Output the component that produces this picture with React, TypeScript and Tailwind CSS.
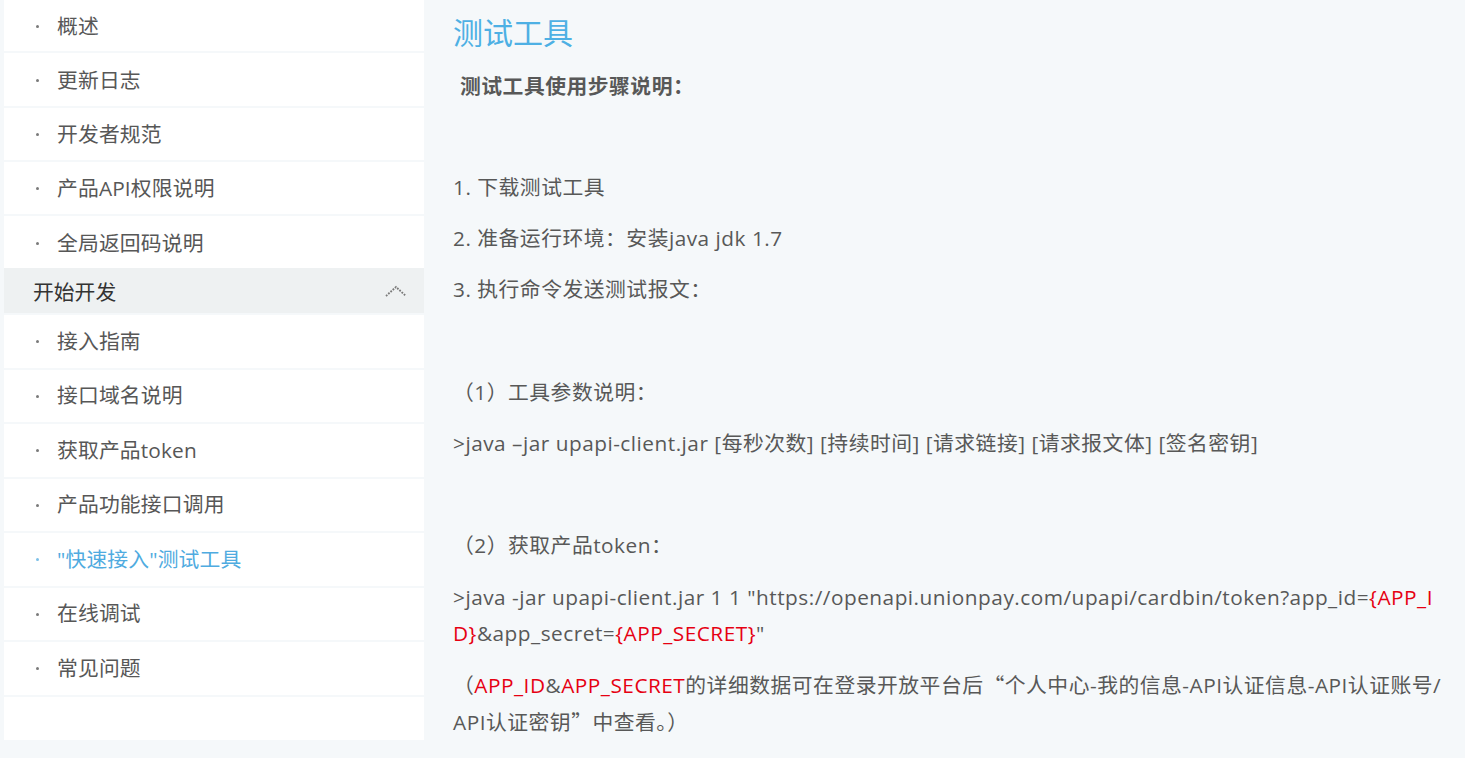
import React from 'react';

const topItems = ['概述', '更新日志', '开发者规范', '产品API权限说明', '全局返回码说明'];
const devItems = ['接入指南', '接口域名说明', '获取产品token', '产品功能接口调用', '"快速接入"测试工具', '在线调试', '常见问题'];
const ACTIVE = '"快速接入"测试工具';

const FONT = { fontFamily: '"Open Sans", "Noto Sans CJK SC", sans-serif' };

const NavItem: React.FC<{ label: string; tall?: boolean }> = ({ label, tall }) => {
  const active = label === ACTIVE;
  return (
    <div
      className={`flex items-center bg-white pl-[32px] text-[20.8px] tracking-[0.15px] ${tall ? 'h-[52.5px]' : 'h-[52.25px] pt-[2px]'} ${active ? 'text-[#4fabe0]' : 'text-[#575757]'}`}
    >
      <span className={`w-[3px] h-[3px] rounded-full mr-[18px] ${active ? 'bg-[#7cc0e8]' : 'bg-[#7a7a7a]'}`} />
      <span>{label}</span>
    </div>
  );
};

const Red: React.FC<{ children: React.ReactNode }> = ({ children }) => (
  <span className="text-[#e60012]">{children}</span>
);

// full-width quote marks, as a CJK font draws them
const Q: React.FC<{ children: React.ReactNode }> = ({ children }) => (
  <span style={{ fontFamily: '"Noto Sans CJK SC", sans-serif' }}>{children}</span>
);

const App: React.FC = () => {
  return (
    <div className="w-[1465px] h-[758px] overflow-hidden bg-[#f5f8fa] flex" style={FONT}>
      {/* sidebar */}
      <aside className="w-[420px] ml-[4px] mt-[-1px] flex flex-col shrink-0">
        <div className="flex flex-col gap-[2px]">
          {topItems.map((t) => (
            <NavItem key={t} label={t} />
          ))}
        </div>
        <div className="h-[45px] bg-[#eef1f2] flex items-center justify-between pl-[29px] pr-[16px] pt-[4px] text-[20.8px] text-[#333]">
          <span>开始开发</span>
          <svg width="24" height="14" viewBox="0 0 24 14" className="mt-[-4px]">
            <polyline
              points="2,12 12,3 22,12"
              fill="none"
              stroke="#7a7a7a"
              strokeWidth="1.8"
              strokeDasharray="1.8 1.2"
            />
          </svg>
        </div>
        <div className="flex flex-col gap-[2px] pt-[2px]">
          {devItems.map((t) => (
            <NavItem key={t} label={t} tall />
          ))}
          <div className="h-[43px] bg-white" />
        </div>
      </aside>

      {/* content */}
      <main className="flex-1 pl-[29px] pr-[20px] text-[20.8px] tracking-[0.5px] text-[#585858] flex flex-col">
        <h1 className="text-[30px] leading-[66px] tracking-normal text-[#4eb0e4] font-normal">测试工具</h1>
        <p className="mt-[2px] mb-[13.25px] leading-[36px] font-bold pl-[7px]">测试工具使用步骤说明：</p>
        <p className="mb-[15.25px] h-[36px]" />
        <p className="mb-[15.25px] leading-[36px]">1. 下载测试工具</p>
        <p className="mb-[15.25px] leading-[36px]">2. 准备运行环境：安装java jdk 1.7</p>
        <p className="mb-[15.25px] leading-[36px]">3. 执行命令发送测试报文：</p>
        <p className="mb-[15.25px] h-[36px]" />
        <p className="mb-[15.25px] leading-[36px]">（1）工具参数说明：</p>
        <p className="mb-[15.25px] leading-[36px]">
          &gt;java –jar upapi-client.jar [每秒次数] [持续时间] [请求链接] [请求报文体] [签名密钥]
        </p>
        <p className="mb-[15.25px] h-[36px]" />
        <p className="mb-[15.25px] leading-[36px]">（2）获取产品token：</p>
        <p className="mb-[15.25px] leading-[36px] whitespace-nowrap">
          &gt;java -jar upapi-client.jar 1 1 "https://openapi.unionpay.com/upapi/cardbin/token?app_id=<Red>{'{APP_I'}</Red>
          <br />
          <Red>{'D}'}</Red>&amp;app_secret=<Red>{'{APP_SECRET}'}</Red>"
        </p>
        <p className="leading-[36px] whitespace-nowrap">
          （<Red>APP_ID</Red>&amp;<Red>APP_SECRET</Red>的详细数据可在登录开放平台后<Q>“</Q>个人中心-我的信息-API认证信息-API认证账号/
          <br />
          API认证密钥<Q>”</Q>中查看。）
        </p>
      </main>
    </div>
  );
};

export default App;
